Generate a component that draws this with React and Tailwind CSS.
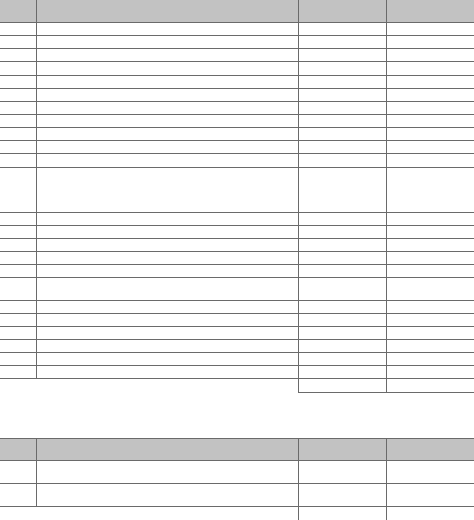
import React from "react";

const LINE = "border-[#6a6a6a]";

function Row({ h, header = false }) {
  return (
    <div className={`flex w-full border-b ${LINE} ${header ? "bg-[#c2c2c2]" : ""}`} style={{ height: h }}>
      <div className="w-[36px] shrink-0" />
      <div className={`w-[262px] shrink-0 border-l ${LINE}`} />
      <div className={`w-[88px] shrink-0 border-l ${LINE}`} />
      <div className={`flex-1 border-l ${LINE}`} />
    </div>
  );
}

function TotalRow({ h }) {
  return (
    <div className="flex w-full" style={{ height: h }}>
      <div className="w-[298px] shrink-0" />
      <div className={`w-[88px] shrink-0 border-l border-b ${LINE}`} />
      <div className={`flex-1 border-l border-b ${LINE}`} />
    </div>
  );
}

export default function App() {
  const rows = [];
  for (let i = 0; i < 11; i++) rows.push(13.15);
  rows.push(45);
  for (let i = 0; i < 5; i++) rows.push(13.2);
  rows.push(22.7);
  for (let i = 0; i < 6; i++) rows.push(13.05);

  return (
    <div className="w-[474px] h-[520px] overflow-hidden bg-white font-['Liberation_Sans',sans-serif]">
      <div className="flex flex-col">
        <Row h={23} header />
        {rows.map((h, i) => (
          <Row key={i} h={h} />
        ))}
        <TotalRow h={13.7} />
      </div>
      <div className={`mt-[44.6px] flex flex-col border-t ${LINE}`}>
        <Row h={22.7} header />
        <Row h={23} />
        <Row h={23} />
        <TotalRow h={20} />
      </div>
    </div>
  );
}
